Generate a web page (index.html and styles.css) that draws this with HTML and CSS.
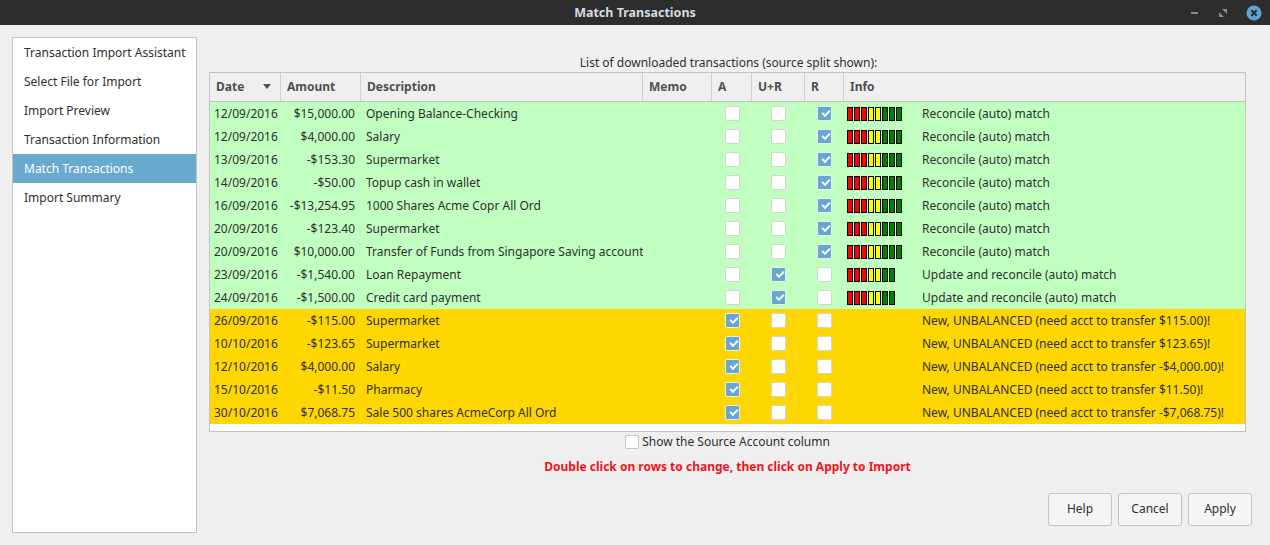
FILE: index.html
```html
<!DOCTYPE html>
<html>
<head>
<meta charset="utf-8">
<link rel="stylesheet" href="styles.css">
</head>
<body>
<div class="window">
  <div class="titlebar">
    <div class="title">Match Transactions</div>
    <div class="wm-buttons">
      <span class="wm-min"></span>
      <svg class="wm-max" width="10" height="10" viewBox="0 0 10 10"><path d="M1 9 L1 4 L6 9 Z M4 1 L9 1 L9 6 Z" fill="#8a8a8a"/></svg>
      <span class="wm-close"><svg width="16" height="16" viewBox="0 0 16 16"><circle cx="8" cy="8" r="7.5" fill="#5fa4d3"/><path d="M5.3 5.3 L10.7 10.7 M10.7 5.3 L5.3 10.7" stroke="#2d2d2d" stroke-width="2"/></svg></span>
    </div>
  </div>
  <div class="main">
    <ul class="sidebar">
      <li>Transaction Import Assistant</li>
      <li>Select File for Import</li>
      <li>Import Preview</li>
      <li>Transaction Information</li>
      <li class="active">Match Transactions</li>
      <li>Import Summary</li>
    </ul>
    <div class="pane">
      <div class="caption">List of downloaded transactions (source split shown):</div>
      <div class="table">
        <div class="row head">
          <div class="c">Date <span class="sort"></span></div>
          <div class="c">Amount</div>
          <div class="c">Description</div>
          <div class="c">Memo</div>
          <div class="c">A</div>
          <div class="c">U+R</div>
          <div class="c">R</div>
          <div class="c last">Info</div>
        </div>
        <div class="body">
          <div class="row green"><div class="c date">12/09/2016</div><div class="c amt">$15,000.00</div><div class="c">Opening Balance-Checking</div><div class="c"></div><div class="c ck"><span class="box"></span></div><div class="c ck"><span class="box"></span></div><div class="c ck"><span class="box on"></span></div><div class="c info"><span class="bars"><i class="r"></i><i class="r"></i><i class="r"></i><i class="y"></i><i class="y"></i><i class="g"></i><i class="g"></i><i class="g"></i></span>Reconcile (auto) match</div></div>
          <div class="row green"><div class="c date">12/09/2016</div><div class="c amt">$4,000.00</div><div class="c">Salary</div><div class="c"></div><div class="c ck"><span class="box"></span></div><div class="c ck"><span class="box"></span></div><div class="c ck"><span class="box on"></span></div><div class="c info"><span class="bars"><i class="r"></i><i class="r"></i><i class="r"></i><i class="y"></i><i class="y"></i><i class="g"></i><i class="g"></i><i class="g"></i></span>Reconcile (auto) match</div></div>
          <div class="row green"><div class="c date">13/09/2016</div><div class="c amt">-$153.30</div><div class="c">Supermarket</div><div class="c"></div><div class="c ck"><span class="box"></span></div><div class="c ck"><span class="box"></span></div><div class="c ck"><span class="box on"></span></div><div class="c info"><span class="bars"><i class="r"></i><i class="r"></i><i class="r"></i><i class="y"></i><i class="y"></i><i class="g"></i><i class="g"></i><i class="g"></i></span>Reconcile (auto) match</div></div>
          <div class="row green"><div class="c date">14/09/2016</div><div class="c amt">-$50.00</div><div class="c">Topup cash in wallet</div><div class="c"></div><div class="c ck"><span class="box"></span></div><div class="c ck"><span class="box"></span></div><div class="c ck"><span class="box on"></span></div><div class="c info"><span class="bars"><i class="r"></i><i class="r"></i><i class="r"></i><i class="y"></i><i class="y"></i><i class="g"></i><i class="g"></i><i class="g"></i></span>Reconcile (auto) match</div></div>
          <div class="row green"><div class="c date">16/09/2016</div><div class="c amt">-$13,254.95</div><div class="c">1000 Shares Acme Copr All Ord</div><div class="c"></div><div class="c ck"><span class="box"></span></div><div class="c ck"><span class="box"></span></div><div class="c ck"><span class="box on"></span></div><div class="c info"><span class="bars"><i class="r"></i><i class="r"></i><i class="r"></i><i class="y"></i><i class="y"></i><i class="g"></i><i class="g"></i><i class="g"></i></span>Reconcile (auto) match</div></div>
          <div class="row green"><div class="c date">20/09/2016</div><div class="c amt">-$123.40</div><div class="c">Supermarket</div><div class="c"></div><div class="c ck"><span class="box"></span></div><div class="c ck"><span class="box"></span></div><div class="c ck"><span class="box on"></span></div><div class="c info"><span class="bars"><i class="r"></i><i class="r"></i><i class="r"></i><i class="y"></i><i class="y"></i><i class="g"></i><i class="g"></i><i class="g"></i></span>Reconcile (auto) match</div></div>
          <div class="row green"><div class="c date">20/09/2016</div><div class="c amt">$10,000.00</div><div class="c">Transfer of Funds from Singapore Saving account</div><div class="c"></div><div class="c ck"><span class="box"></span></div><div class="c ck"><span class="box"></span></div><div class="c ck"><span class="box on"></span></div><div class="c info"><span class="bars"><i class="r"></i><i class="r"></i><i class="r"></i><i class="y"></i><i class="y"></i><i class="g"></i><i class="g"></i><i class="g"></i></span>Reconcile (auto) match</div></div>
          <div class="row green"><div class="c date">23/09/2016</div><div class="c amt">-$1,540.00</div><div class="c">Loan Repayment</div><div class="c"></div><div class="c ck"><span class="box"></span></div><div class="c ck"><span class="box on"></span></div><div class="c ck"><span class="box"></span></div><div class="c info"><span class="bars"><i class="r"></i><i class="r"></i><i class="r"></i><i class="y"></i><i class="y"></i><i class="g"></i><i class="g"></i></span>Update and reconcile (auto) match</div></div>
          <div class="row green"><div class="c date">24/09/2016</div><div class="c amt">-$1,500.00</div><div class="c">Credit card payment</div><div class="c"></div><div class="c ck"><span class="box"></span></div><div class="c ck"><span class="box on"></span></div><div class="c ck"><span class="box"></span></div><div class="c info"><span class="bars"><i class="r"></i><i class="r"></i><i class="r"></i><i class="y"></i><i class="y"></i><i class="g"></i><i class="g"></i></span>Update and reconcile (auto) match</div></div>
          <div class="row gold"><div class="c date">26/09/2016</div><div class="c amt">-$115.00</div><div class="c">Supermarket</div><div class="c"></div><div class="c ck"><span class="box on"></span></div><div class="c ck"><span class="box"></span></div><div class="c ck"><span class="box"></span></div><div class="c info"><span class="bars"></span>New, UNBALANCED (need acct to transfer $115.00)!</div></div>
          <div class="row gold"><div class="c date">10/10/2016</div><div class="c amt">-$123.65</div><div class="c">Supermarket</div><div class="c"></div><div class="c ck"><span class="box on"></span></div><div class="c ck"><span class="box"></span></div><div class="c ck"><span class="box"></span></div><div class="c info"><span class="bars"></span>New, UNBALANCED (need acct to transfer $123.65)!</div></div>
          <div class="row gold"><div class="c date">12/10/2016</div><div class="c amt">$4,000.00</div><div class="c">Salary</div><div class="c"></div><div class="c ck"><span class="box on"></span></div><div class="c ck"><span class="box"></span></div><div class="c ck"><span class="box"></span></div><div class="c info"><span class="bars"></span>New, UNBALANCED (need acct to transfer -$4,000.00)!</div></div>
          <div class="row gold"><div class="c date">15/10/2016</div><div class="c amt">-$11.50</div><div class="c">Pharmacy</div><div class="c"></div><div class="c ck"><span class="box on"></span></div><div class="c ck"><span class="box"></span></div><div class="c ck"><span class="box"></span></div><div class="c info"><span class="bars"></span>New, UNBALANCED (need acct to transfer $11.50)!</div></div>
          <div class="row gold"><div class="c date">30/10/2016</div><div class="c amt">$7,068.75</div><div class="c">Sale 500 shares AcmeCorp All Ord</div><div class="c"></div><div class="c ck"><span class="box on"></span></div><div class="c ck"><span class="box"></span></div><div class="c ck"><span class="box"></span></div><div class="c info"><span class="bars"></span>New, UNBALANCED (need acct to transfer -$7,068.75)!</div></div>
        </div>
      </div>
      <div class="show-src"><span class="box plain"></span>Show the Source Account column</div>
      <div class="hint">Double click on rows to change, then click on Apply to Import</div>
      <div class="buttons">
        <button class="btn">Help</button>
        <button class="btn">Cancel</button>
        <button class="btn">Apply</button>
      </div>
    </div>
  </div>
</div>
</body>
</html>
```

FILE: styles.css
```css
* { box-sizing: border-box; }
html, body { margin: 0; padding: 0; }
body {
  width: 1270px;
  height: 545px;
  overflow: hidden;
  background: #efefef;
  font-family: "Noto Sans", "Open Sans", sans-serif;
  font-size: 12px;
  color: #2f2f2f;
}
.window { display: flex; flex-direction: column; height: 545px; }
.titlebar {
  height: 25px;
  background: #2d2d2d;
  position: relative;
  display: flex;
  align-items: center;
  justify-content: center;
}
.title { color: #d5dbe0; font-weight: bold; font-size: 12.5px; }
.wm-buttons {
  position: absolute;
  right: 8px;
  top: 0;
  height: 25px;
  display: flex;
  align-items: center;
}
.wm-min { width: 7px; height: 2px; background: #8a8a8a; margin-right: 20px; }
.wm-max { margin-right: 18px; }
.wm-close { display: flex; }

.main { flex: 1; display: flex; padding: 12px 0 12px 12px; }
.sidebar {
  list-style: none;
  margin: 0;
  padding: 0;
  width: 185px;
  background: #fff;
  border: 1px solid #c3c3c3;
}
.sidebar li { height: 29px; line-height: 29px; padding-left: 11px; color: #2f2f2f; white-space: nowrap; }
.sidebar li.active { background: #69a9cd; color: #fff; }

.pane { flex: 1; display: flex; flex-direction: column; padding: 0 18px 0 12px; margin-top: 18px; }
.caption { text-align: center; line-height: 16px; margin-right: 6px; padding-left: 2px; }
.table {
  margin-top: 1px;
  margin-right: 6px;
  border: 1px solid #c3c3c3;
  background: #fff;
  height: 360px;
}
.row {
  display: grid;
  grid-template-columns: 71px 80px 282px 69px 40px 53px 39px 1fr;
  height: 23px;
  align-items: center;
}
.row.head {
  height: 29px;
  background: #efefef;
  border-bottom: 1px solid #c3c3c3;
  font-weight: bold;
  color: #505050;
}
.row.head .c { height: 28px; line-height: 27px; border-right: 1px solid #cfcfcf; padding-left: 6px; }
.row.head .c.last { border-right: none; }
.sort {
  display: inline-block;
  width: 0; height: 0;
  border-left: 4px solid transparent;
  border-right: 4px solid transparent;
  border-top: 5px solid #505050;
  margin-left: 16px;
  vertical-align: 2px;
}
.row .c { white-space: nowrap; overflow: hidden; padding-left: 5px; line-height: 22px; }
.row .c.date { padding-left: 4px; }
.row .c.amt { text-align: right; padding-right: 6px; padding-left: 0; }
.row .c.ck { display: flex; justify-content: center; padding: 0; }
.green { background: #c1ffc1; }
.gold { background: #ffd700; }
.box {
  width: 15px; height: 15px;
  border: 1px solid #d4d4d4;
  border-radius: 2px;
  background: #fff;
  display: inline-block;
  position: relative;
}
.box.on { background: #69a7d3; border-color: #e6eef4; }
.box.on::after {
  content: "";
  position: absolute;
  left: 4px; top: 3px;
  width: 6px; height: 3px;
  border-left: 2px solid #fff;
  border-bottom: 2px solid #fff;
  transform: rotate(-45deg);
}
.info { display: flex; align-items: center; padding-left: 3px !important; }
.bars { display: inline-flex; gap: 1px; width: 75px; height: 14px; flex: none; }
.bars i { display: block; width: 6px; height: 14px; border: 1px solid #000; }
.bars i.r { background: #ff0000; }
.bars i.y { background: #ffff00; }
.bars i.g { background: #007f00; }

.show-src {
  display: flex;
  align-items: center;
  justify-content: center;
  margin-right: 6px;
  margin-top: 2px;
  line-height: 16px;
  gap: 3px;
}
.box.plain { width: 14px; height: 14px; border-color: #c8c8c8; }
.hint {
  text-align: center;
  color: #f2131b;
  font-weight: bold;
  margin-right: 6px;
  margin-top: 9px;
  line-height: 16px;
}
.buttons { display: flex; justify-content: flex-end; gap: 6px; margin-top: 18px; }
.btn {
  width: 64px;
  height: 33px;
  font-family: inherit;
  font-size: 12px;
  color: #2f2f2f;
  background: #f5f5f5;
  border: 1px solid #c3c3c3;
  border-radius: 3px;
  padding: 0 0 2px 0;
}
```
